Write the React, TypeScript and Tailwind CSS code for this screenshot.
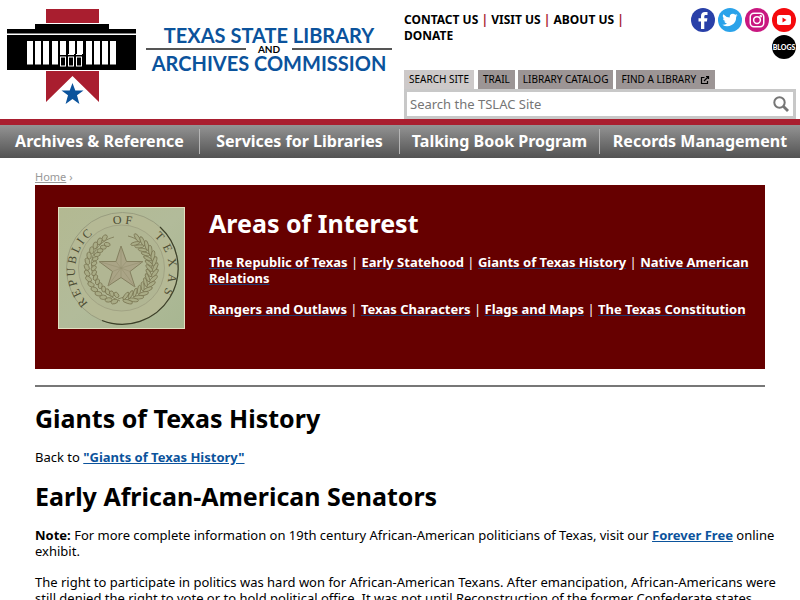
import type { ReactNode } from "react";

const quickLinks = ["CONTACT US", "VISIT US", "ABOUT US"];
const navItems = ["Archives & Reference", "Services for Libraries", "Talking Book Program", "Records Management"];
const topicRows = [
  ["The Republic of Texas", "Early Statehood", "Giants of Texas History", "Native American Relations"],
  ["Rangers and Outlaws", "Texas Characters", "Flags and Maps", "The Texas Constitution"],
];

function BuildingLogo() {
  const columns = [27, 35, 43, 52, 60, 69, 77, 86, 94, 102, 110];
  const doors = [61, 69, 77];
  return (
    <svg width="136" height="106" viewBox="0 0 136 106" className="shrink-0" aria-hidden="true">
      <rect x="46" y="9" width="53" height="14" fill="#a91e2f" />
      <path d="M46 71H99V102L72.500 76L46 102Z" fill="#a91e2f" />
      <path d="M35 24H109V29H136V33.500H7V29H35Z" fill="#000" />
      <rect x="7" y="35" width="129" height="35" fill="#000" />
      {columns.map((x) => (
        <rect key={x} x={x} y="41" width="6" height="23.500" fill="#fff" />
      ))}
      {doors.map((x) => (
        <g key={x}>
          <rect x={x - 1} y="54" width="7" height="13" fill="#000" />
          <rect x={x - 0.500} y="57" width="5" height="9" fill="none" stroke="#fff" strokeWidth="1" />
          <rect x={x - 1} y="54" width="6" height="1" fill="#fff" />
        </g>
      ))}
      <path d="M72.500 83L75.300 90.500H83.500L77 95.300L79.400 104L72.500 99L65.600 104L68 95.300L61.500 90.500H69.700Z" fill="#0b539c" />
    </svg>
  );
}

function Seal() {
  const leaves = Array.from({ length: 15 }, (_, i) => 22 + i * 10);
  return (
    <svg viewBox="0 0 125 120" className="block w-full" role="img" aria-label="Republic of Texas seal">
      <defs>
        <linearGradient id="paper" x1="0" x2="1" y1="0" y2="1">
          <stop offset="0" stopColor="#b3b992" />
          <stop offset="0.500" stopColor="#b2bb9a" />
          <stop offset="1" stopColor="#a7b691" />
        </linearGradient>
        <path id="ring" d="M29.200 95.400A47 47 0 1 1 96.800 95.400" />
      </defs>
      <rect width="127" height="122" fill="url(#paper)" />
      <circle cx="63.500" cy="60.500" r="56" fill="#b5b995" stroke="#92967a" strokeWidth="0.800" />
      <path d="M101 19A56 56 0 0 1 43 112.500" fill="none" stroke="#3c4028" strokeWidth="1.200" />
      <circle cx="62.500" cy="60" r="43" fill="#b1b693" stroke="#999a7d" strokeWidth="0.700" />
      <g fill="#4c4b32" fontSize="12" fontFamily="Liberation Serif, serif">
        <text><textPath href="#ring" startOffset="0">R E P U B L I C</textPath></text>
        <text><textPath href="#ring" startOffset="101">O F</textPath></text>
        <text><textPath href="#ring" startOffset="145">T {"\u00a0"}E {"\u00a0"}X {"\u00a0"}A {"\u00a0"}S</textPath></text>
      </g>
      <path d="M55 29C25 37 23 78 61 93M69 28C103 37 102 78 59 91" fill="none" stroke="#7b7754" strokeWidth="0.800" />
      {leaves.map((a) => (
        <g key={a} fill="#a9ac86" stroke="#7b7754" strokeWidth="0.800">
          <g transform={`rotate(${a} 62 60)`}>
            <ellipse cx="66" cy="26" rx="5" ry="1.800" transform="rotate(35 66 26)" />
            <ellipse cx="66" cy="32" rx="4.500" ry="1.600" transform="rotate(-35 66 32)" />
          </g>
          <g transform={`rotate(${-a} 62 60)`}>
            <ellipse cx="58" cy="26" rx="3.500" ry="2.200" transform="rotate(-35 58 26)" />
            <ellipse cx="58" cy="33" rx="3" ry="2" transform="rotate(35 58 33)" />
          </g>
        </g>
      ))}
      <path d="M62 38L67.500 53.500H84L71 63.500L76 79L62 69.500L49 78L53.500 63.500L40 53.500H57Z" fill="#aaa486" stroke="#7f7b5a" strokeWidth="0.900" />
      <path d="M62 38V60L84 53.500M62 60L76 79M62 60L49 78M62 60L40 53.500M62 60L67.500 53.500M62 60L71 63.500M62 60V69.500M62 60L53.500 63.500M62 60L57 53.500" fill="none" stroke="#959070" strokeWidth="0.600" />
    </svg>
  );
}

function Social({ label, className, children }: { label: string; className: string; children: ReactNode }) {
  return (
    <a href="#" aria-label={label} className={`flex size-6 items-center justify-center rounded-full text-white ${className}`}>
      {children}
    </a>
  );
}

function Topic({ children }: { children: ReactNode }) {
  return (
    <a href="#" className="font-bold text-white underline decoration-[#1d3a72]">
      {children}
    </a>
  );
}

export default function App() {
  return (
    <div className="bg-white font-['Noto_Sans',sans-serif] text-[13px] leading-4 text-black">
      <header>
        <div className="grid grid-cols-2">
          <a href="#" className="flex items-start" aria-label="Texas State Library and Archives Commission">
            <BuildingLogo />
            <span className="mt-6 ml-2.5 mr-2 flex flex-1 flex-col items-center font-['Lato',sans-serif] text-[20px] leading-[22px] font-bold whitespace-nowrap text-[#0b539c]">
              <span>TEXAS STATE LIBRARY</span>
              <span className="flex w-full items-center gap-3 text-[10px] leading-[6px] text-black">
                <span className="h-0.5 flex-1 bg-[#555]" />
                AND
                <span className="h-0.5 flex-1 bg-[#555]" />
              </span>
              <span>ARCHIVES COMMISSION</span>
            </span>
          </a>
          <div className="px-1">
            <div className="flex h-[70px] justify-between">
              <p className="mt-3 w-60 text-[12px] font-bold">
                {quickLinks.map((t) => (
                  <span key={t}>
                    <a href="#">{t}</a> <span className="text-[#a91e2f]">|</span>{" "}
                  </span>
                ))}
                <a href="#">DONATE</a>
              </p>
              <div className="mt-2 flex w-28 flex-wrap content-start justify-end gap-[3px]">
                <Social label="Facebook" className="bg-[#2940a8]">
                  <svg viewBox="0 0 24 24" className="size-6" fill="currentColor"><path d="M10 21V13.500H7.500V10.200H10V8C10 5.200 11.500 4 14 4H16.500V7H14.800C13.700 7 13.300 7.500 13.300 8.500V10.200H16.400L15.900 13.500H13.300V21Z" /></svg>
                </Social>
                <Social label="Twitter" className="bg-[#2ba3ea]">
                  <svg viewBox="0 0 24 24" className="size-4" fill="currentColor"><path d="M23.500 4.900a9 9 0 0 1-2.700.7 4.700 4.700 0 0 0 2-2.600 9 9 0 0 1-3 1.200A4.700 4.700 0 0 0 11.700 8.400 13.400 13.400 0 0 1 2 3.500a4.700 4.700 0 0 0 1.500 6.300 4.700 4.700 0 0 1-2.100-.6 4.700 4.700 0 0 0 3.800 4.700 4.700 4.700 0 0 1-2.100.1 4.700 4.700 0 0 0 4.400 3.200A9.500 9.500 0 0 1 .5 19.200 13.400 13.400 0 0 0 21.200 7.300a9 9 0 0 0 2.300-2.400Z" /></svg>
                </Social>
                <Social label="Instagram" className="bg-[#c91780]">
                  <svg viewBox="0 0 24 24" className="size-[18px]" fill="none" stroke="currentColor" strokeWidth="2"><rect x="3" y="3" width="18" height="18" rx="5" /><circle cx="12" cy="12" r="4.500" /><circle cx="17" cy="7" r="0.700" /></svg>
                </Social>
                <Social label="YouTube" className="bg-[#f50a0d]">
                  <svg viewBox="0 0 24 24" className="size-6"><rect x="5" y="7" width="14" height="10" rx="2.500" fill="#fff" /><path d="M10.500 9.500V14.500L14.500 12Z" fill="#f50a0d" /></svg>
                </Social>
                <Social label="Blogs" className="bg-black font-['Lato',sans-serif] text-[7px] font-black">BLOGS</Social>
              </div>
            </div>
            <div className="flex gap-[3px] text-[10px] leading-[19px]">
              <button type="button" className="mr-px bg-[#cdc9c9] px-[5px]">SEARCH SITE</button>
              <button type="button" className="bg-[#9c9595] px-[5px]">TRAIL</button>
              <button type="button" className="bg-[#9c9595] px-[5px]">LIBRARY CATALOG</button>
              <button type="button" className="flex items-center gap-1 bg-[#9c9595] px-[5px]">
                FIND A LIBRARY
                <svg viewBox="0 0 10 10" className="size-[10px]" fill="none" stroke="currentColor" strokeWidth="1.200"><path d="M4.500 2.500H1.500V8.500H7.500V6" /><path d="M4 6L8.500 1.500M6 1.500H8.500V4" /></svg>
              </button>
            </div>
            <form className="flex h-[30px] items-center border-[3px] border-[#c8c8c8] bg-white" onSubmit={(e) => e.preventDefault()}>
              <input type="text" aria-label="Search the TSLAC Site" placeholder="Search the TSLAC Site" className="min-w-0 flex-1 px-[3px] outline-none placeholder:text-[#757575]" />
              <button type="submit" aria-label="Search" className="mr-1 text-[#767676]">
                <svg viewBox="0 0 16 16" className="block size-4" fill="none" stroke="currentColor"><circle cx="6.500" cy="6.500" r="5.200" strokeWidth="2" /><path d="M10.500 10.500L15 15" strokeWidth="2.800" /></svg>
              </button>
            </form>
          </div>
        </div>
        <nav className="grid h-[39px] grid-cols-4 border-t-[6px] border-[#a91e2f] bg-linear-to-b from-[#949494] to-[#535353] text-center text-[16px] font-bold text-white">
          {navItems.map((t) => (
            <a key={t} href="#" className="my-1 flex items-center justify-center border-r border-[#b5b5b5] pb-0.5 whitespace-nowrap last:border-r-0">
              {t}
            </a>
          ))}
        </nav>
      </header>

      <main className="pt-[11px]">
        <div className="mx-[35px]">
          <div className="h-4 text-[11px] text-[#999]">
            <a href="#" className="underline">Home</a> ›
          </div>
          <section className="flex gap-6 bg-[#660000] pt-[22px] pr-2 pb-[37px] pl-[23px] text-white">
            <div className="w-[127px] shrink-0 self-start border border-[#e2dfc0]">
              <Seal />
            </div>
            <div className="flex-1">
              <h2 className="mb-[15px] text-[25px] leading-8 font-bold">Areas of Interest</h2>
              {topicRows.map((row) => (
                <p key={row[0]} className="mb-[15px]">
                  {row.map((t, i) => (
                    <span key={t}>
                      {i > 0 && " | "}
                      <Topic>{t}</Topic>
                    </span>
                  ))}
                </p>
              ))}
            </div>
          </section>
          <hr className="my-4 border-t-2 border-[#777]" />
        </div>
        <article className="mr-4 ml-[35px]">
          <h1 className="mb-4 text-[25px] leading-[30px] font-bold">Giants of Texas History</h1>
          <p className="mb-4">
            Back to <a href="#" className="font-bold text-[#0b539c] underline">"Giants of Texas History"</a>
          </p>
          <h1 className="mb-4 text-[25px] leading-[30px] font-bold">Early African-American Senators</h1>
          <p className="mb-[15px]">
            <strong>Note:</strong> For more complete information on 19th century African-American politicians of Texas, visit our{" "}
            <a href="#" className="font-bold text-[#0b539c] underline">Forever Free</a> online exhibit.
          </p>
          <p>
            The right to participate in politics was hard won for African-American Texans. After emancipation, African-Americans were still denied the right to vote or to hold political office. It was not until Reconstruction of the former Confederate states
          </p>
        </article>
      </main>
    </div>
  );
}
